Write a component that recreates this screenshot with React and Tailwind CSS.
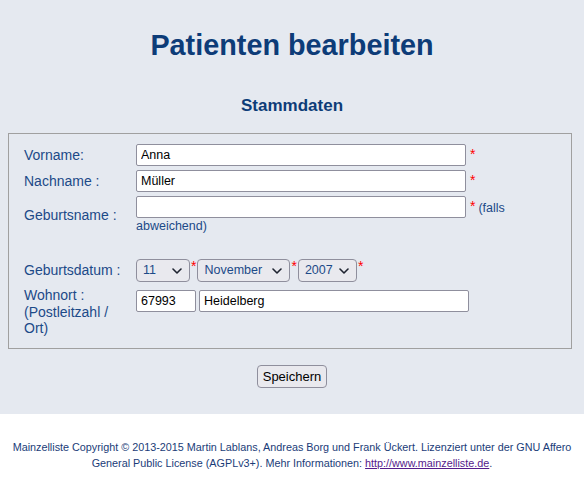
import React from "react";

function Chevron() {
  return (
    <svg width="10" height="6" viewBox="0 0 10 6" className="pointer-events-none absolute right-[8px] top-1/2 -translate-y-1/2">
      <path d="M1 1l4 4 4-4" fill="none" stroke="#1f2430" strokeWidth="1.6" strokeLinecap="round" strokeLinejoin="round" />
    </svg>
  );
}

function Sel({ value, options, w }) {
  return (
    <div className={`relative ${w}`}>
      <select
        defaultValue={value}
        className="h-[23px] w-full appearance-none rounded-[4px] border border-[#8f8f9d] bg-[#e9e9ee] pl-[6px] text-[12.5px] text-[#1c4a88] outline-none font-['Liberation_Sans',Arial,sans-serif]"
      >
        {options.map((o) => (
          <option key={o}>{o}</option>
        ))}
      </select>
      <Chevron />
    </div>
  );
}

const inputCls =
  "h-[22px] rounded-[2px] border border-[#8f8f9d] bg-white px-[4px] text-[12.5px] text-black outline-none font-['Liberation_Sans',Arial,sans-serif]";

export default function App() {
  return (
    <div className="min-h-[481px] bg-white font-['Liberation_Sans',Arial,sans-serif] text-[#1c4a88]">
      <div className="h-[414px] bg-[#e5e9f0] pt-[29px]">
        <h1 className="text-center text-[28.8px] font-bold leading-[33px] text-[#0d3c78]">Patienten bearbeiten</h1>
        <h2 className="mt-[34px] text-center text-[17px] font-bold leading-[20px] text-[#0d3c78]">Stammdaten</h2>
        <div className="ml-[8px] mt-[17px] h-[216px] w-[564px] border border-[#a0a0a0] pl-[15px] pt-[10px] text-[14px]">
          <div className="flex h-[22px] items-center">
            <div className="w-[112px]">Vorname:</div>
            <input className={`${inputCls} w-[330px]`} defaultValue="Anna" />
            <span className="ml-[4px] self-start text-[14px] leading-[20px] text-[#ff0000]">*</span>
          </div>
          <div className="mt-[4px] flex h-[22px] items-center">
            <div className="w-[112px]">Nachname :</div>
            <input className={`${inputCls} w-[330px]`} defaultValue="Müller" />
            <span className="ml-[4px] self-start text-[14px] leading-[20px] text-[#ff0000]">*</span>
          </div>
          <div className="mt-[4px] flex h-[38px] items-center">
            <div className="w-[112px]">Geburtsname :</div>
            <div className="flex flex-col">
              <div className="flex items-start">
                <input className={`${inputCls} w-[330px]`} />
                <span className="ml-[4px] text-[14px] leading-[20px] text-[#ff0000]">*</span>
                <span className="ml-[3px] mt-[4px] text-[12.5px] leading-[16px]">(falls</span>
              </div>
              <div className="text-[12.5px] leading-[16px]">abweichend)</div>
            </div>
          </div>
          <div className="mt-[25px] flex h-[23px] items-center">
            <div className="w-[112px]">Geburtsdatum :</div>
            <Sel value="11" options={["11"]} w="w-[54px]" />
            <span className="ml-[1px] self-start text-[14px] leading-[14px] text-[#ff0000]">*</span>
            <Sel value="November" options={["November"]} w="ml-[1px] w-[93px]" />
            <span className="ml-[1px] self-start text-[14px] leading-[14px] text-[#ff0000]">*</span>
            <Sel value="2007" options={["2007"]} w="ml-[1px] w-[59px]" />
            <span className="ml-[1px] self-start text-[14px] leading-[14px] text-[#ff0000]">*</span>
          </div>
          <div className="mt-[5px] flex items-start">
            <div className="w-[112px] leading-[16.5px]">
              Wohnort :<br />(Postleitzahl /<br />Ort)
            </div>
            <div className="mt-[3px] flex gap-[3px]">
              <input className={`${inputCls} w-[60px]`} defaultValue="67993" />
              <input className={`${inputCls} w-[270px]`} defaultValue="Heidelberg" />
            </div>
          </div>
        </div>
        <div className="mt-[16px] flex justify-center">
          <button className="h-[23px] w-[70px] rounded-[4px] border border-[#8f8f9d] bg-[#e9e9ee] text-[13px] text-black">
            Speichern
          </button>
        </div>
      </div>
      <p className="mx-auto w-[584px] px-[4px] pt-[25px] text-center text-[10.8px] leading-[16px] text-[#1a3c78]">
        Mainzelliste Copyright © 2013-2015 Martin Lablans, Andreas Borg und Frank Ückert. Lizenziert unter der GNU Affero
        General Public License (AGPLv3+). Mehr Informationen:{" "}
        <a href="#" className="text-[#551a8b] underline">http://www.mainzelliste.de</a>.
      </p>
    </div>
  );
}
